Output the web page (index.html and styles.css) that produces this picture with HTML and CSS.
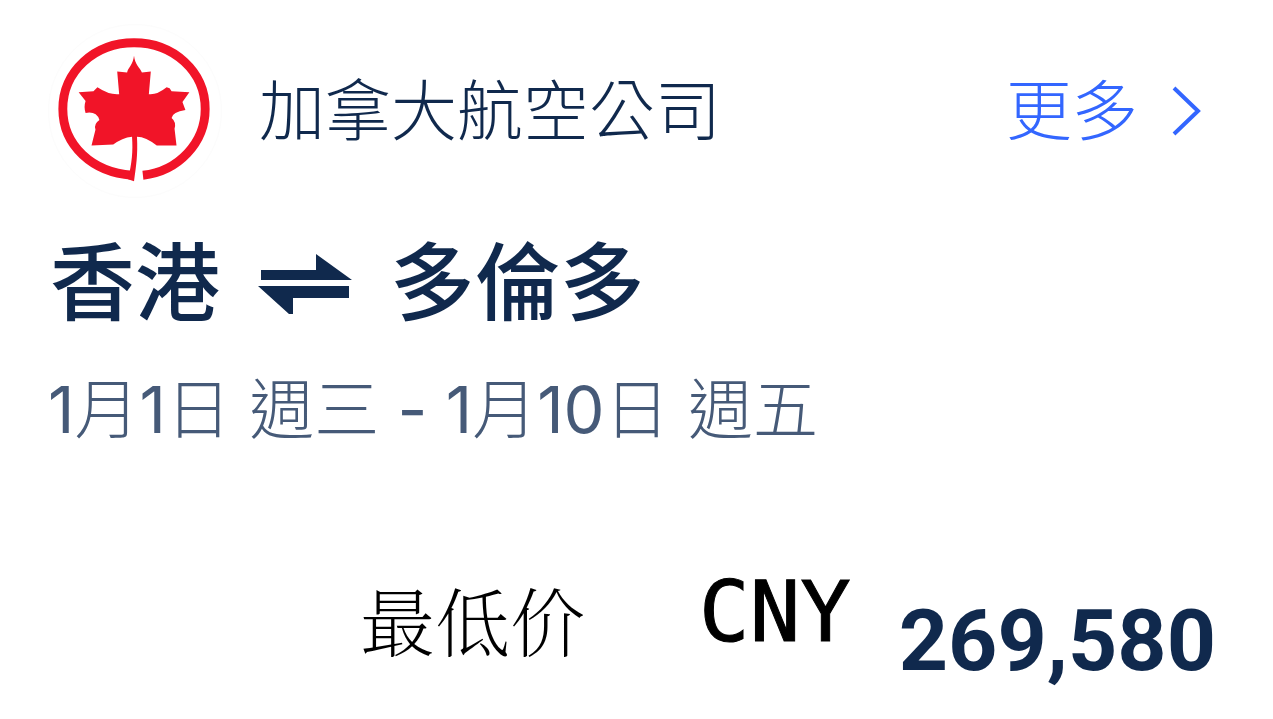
FILE: index.html
```html
<!DOCTYPE html>
<html lang="zh-Hant">
<head>
<meta charset="utf-8">
<meta name="viewport" content="width=device-width, initial-scale=1">
<title>加拿大航空公司</title>
<link rel="stylesheet" href="styles.css">
</head>
<body>
<main class="card">
  <header class="header">
    <span class="logo">
      <svg viewBox="0 0 174 174" aria-hidden="true">
        <path class="ring" d="M84 152C44 149 14 122 14 85C14 47 46 18 86 18S158 47 158 85C158 119 131 148 95 152"/>
        <path class="leaf" d="M86 31C87 40 92 43 94 48L103 47L101 70Q109 71 119 63L122 64L124 67L142 68L135 78L138 86Q125 88 124 94Q129 98 127 105L129 122H109Q98 113 89 113C90 132 88 143 86 158L80 156C84 139 85 128 84 113Q74 114 65 121L43 122L47 106Q45 100 51 96Q48 87 37 89Q35 83 37 77L30 68L45 67L49 63Q61 71 71 70L69 47L79 48C80 43 85 40 86 31Z"/>
      </svg>
    </span>
    <h1 class="airline">加拿大航空公司</h1>
    <a class="more" href="#more">更多
      <svg class="chevron" viewBox="0 0 30 50" aria-hidden="true"><path d="M2 2L26 25L2 48"/></svg>
    </a>
  </header>
  <h2 class="route">
    <span>香港</span>
    <svg class="swap" viewBox="0 0 94 60" role="img" aria-label="往返"><path d="M3 16H58V0L94 26H3ZM91 44H35V60H31L0 32H91Z"/></svg>
    <span>多倫多</span>
  </h2>
  <p class="dates"><span class="num">1</span>月<span class="num">1</span>日 週三 <span class="num">-</span> <span class="num">1</span>月<span class="num">10</span>日 週五</p>
  <p class="price">
    <span class="label" lang="zh-Hans">最低价</span>
    <span class="currency">CNY</span>
    <strong class="amount">269,580</strong>
  </p>
</main>
</body>
</html>
```
FILE: styles.css
```css
* { box-sizing: border-box; }
body {
  margin: 0;
  background: #fff;
  color: #10294d;
  font-family: Inter, "Noto Sans CJK TC", sans-serif;
}
.card { padding: 24px 57px 24px 48px; }
.header { display: flex; align-items: center; padding-right: 14px; }
.logo { flex: none; width: 174px; height: 174px; border: 1px solid #fcfcfc; border-radius: 50%; }
.logo svg { display: block; width: 100%; }
.ring { fill: none; stroke: #f11428; stroke-width: 9; }
.leaf { fill: #f11428; }
.airline { flex: 1; margin: 0 0 0 37px; font-size: 66px; line-height: 80px; font-weight: 300; }
.more { display: flex; align-items: center; gap: 34px; color: #36f; text-decoration: none; font-size: 66px; line-height: 80px; font-weight: 300; }
.chevron { width: 30px; height: 50px; fill: none; stroke: #36f; stroke-width: 4; }
.route { display: flex; align-items: center; gap: 38px; margin: 36px 0 0 2px; font-size: 85px; line-height: 100px; font-weight: 500; }
.swap { width: 94px; height: 60px; fill: #10294d; }
.dates { margin: 36px 0 0; color: #465a78; font-size: 65px; line-height: 80px; font-weight: 300; }
.num { font-weight: 400; }
.price { display: flex; justify-content: flex-end; align-items: flex-start; margin: 117px 0 0; line-height: 90px; }
.label { margin-top: 7px; color: #000; font-family: "Noto Serif CJK SC", "Noto Sans CJK SC", serif; font-size: 75px; font-weight: 200; }
.currency { margin-left: 114px; color: #000; font-family: "DejaVu Sans Mono", monospace; font-size: 84px; -webkit-text-stroke: 1px; }
.amount { margin: 29px 0 0 48px; font-family: Roboto, sans-serif; font-size: 86px; font-weight: 700; }
```
